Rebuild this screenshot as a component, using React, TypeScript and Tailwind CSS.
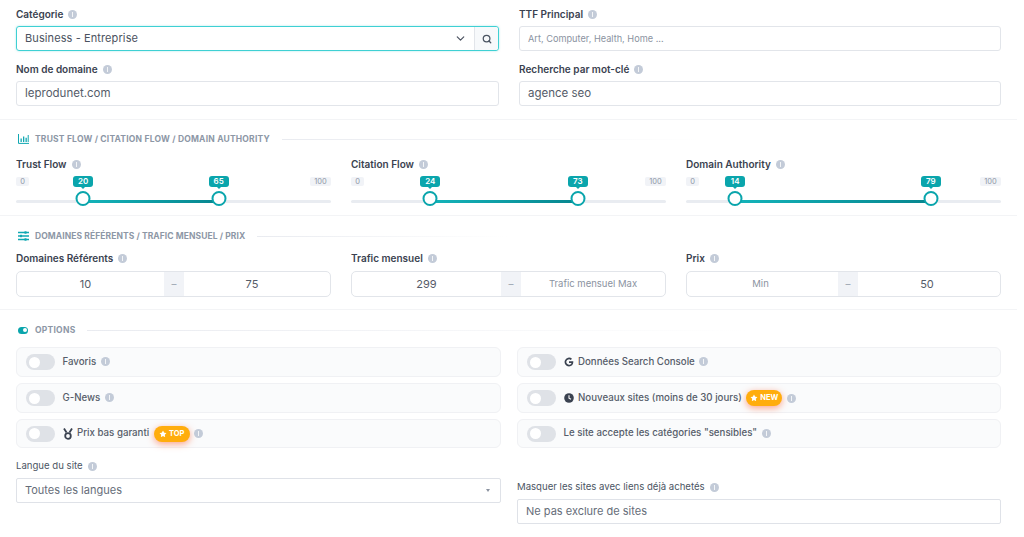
import React from 'react'
import { Search, ChevronDown, Star } from 'lucide-react'

const font = "font-['Inter','Liberation_Sans',sans-serif]"

const Info = ({ className = '' }: { className?: string }) => (
   <span className={`inline-flex w-[9px] h-[9px] rounded-full bg-[#c3cbd8] items-center justify-center shrink-0 ${className}`}>
      <span className='w-[1px] h-[5px] bg-white/80'></span>
   </span>
)

const Label = ({ text, light }: { text: string; light?: boolean }) => (
   <div className={`flex items-center gap-[5px] h-[14px] ${light ? 'text-[9.6px] font-normal text-[#4b5563]' : 'text-[10px] font-semibold text-[#3a4250]'}`}>
      {text} <Info />
   </div>
)

const TextBox = ({ value, small }: { value: string; small?: boolean }) => (
   <div className={`h-[25px] border border-[#e2e5ea] rounded-[3px] px-2 flex items-center ${small ? 'text-[9.2px] text-[#8b93a1]' : 'text-[11.5px] text-[#555c69]'}`}>{value}</div>
)

const Heading = ({ icon, text, track, lineClass }: { icon: React.ReactNode; text: string; track: string; lineClass: string }) => (
   <div className='flex items-center h-[12px]'>
      <span className='w-[19px] flex justify-start pl-[2px] text-[#11a8b2]'>{icon}</span>
      <span className={`text-[8.5px] font-bold text-[#8d97a6] whitespace-nowrap ${track}`}>{text}</span>
      <span className={`h-[1px] ml-3 bg-linear-to-r from-[#e9ebf0] to-transparent ${lineClass}`}></span>
   </div>
)

const Slider = ({ label, lo, hi }: { label: string; lo: number; hi: number }) => {
   const pos = (v: number) => `calc(${v / 100} * (100% - 14px) + 7px)`
   return (
      <div>
         <Label text={label} />
         <div className='relative h-[32px] mt-[5px]'>
            <span className='absolute left-0 top-[1px] h-[9px] w-[13px] text-center rounded-[2px] bg-[#f1f3f7] text-[7.5px] leading-[9px] text-[#8f98a6]'>0</span>
            <span className='absolute right-0 top-[1px] h-[9px] w-[21px] text-center rounded-[2px] bg-[#f1f3f7] text-[7.5px] leading-[9px] text-[#8f98a6]'>100</span>
            <div className='absolute left-0 right-0 top-[24px] h-[3px] rounded-full bg-[#e9ecf1]'></div>
            <div className='absolute top-[24px] h-[3px] bg-linear-to-r from-[#14b4ba] to-[#07868f]' style={{ left: pos(lo), right: `calc(100% - ${pos(hi)})` }}></div>
            {[lo, hi].map(v => (
               <React.Fragment key={v}>
                  <span className='absolute top-0 -translate-x-1/2 h-[11px] w-[20px] rounded-[3px] bg-[#0aa5ac] text-white text-[8px] leading-[11px] font-semibold text-center' style={{ left: pos(v) }}>
                     {v}
                     <span className='absolute left-[8px] top-[11px] border-x-[2px] border-t-[2px] border-x-transparent border-t-[#0aa5ac]'></span>
                  </span>
                  <span className='absolute top-[15px] -translate-x-1/2 w-[15px] h-[15px] rounded-full bg-white border-[2px] border-[#0aa5ac]' style={{ left: pos(v) }}></span>
               </React.Fragment>
            ))}
         </div>
      </div>
   )
}

const Range = ({ label, min, max, firstW, pad }: { label: string; min: string; max: string; firstW: string; pad: string }) => {
   const cell = (v: string) => (
      <div className={`flex-1 text-center ${pad} ${/\d/.test(v) ? 'text-[11px] text-[#555c69]' : 'text-[9.5px] text-[#8b93a1]'}`}>{v}</div>
   )
   return (
      <div>
         <Label text={label} />
         <div className='mt-[6px] h-[26px] border border-[#e2e5ea] rounded-[5px] flex items-stretch overflow-hidden'>
            <div className={`flex items-center ${firstW}`}>{cell(min)}</div>
            <div className='w-[20px] bg-[#f1f3f7] text-[#9aa3b0] text-[10px] flex items-center justify-center'>–</div>
            <div className='flex items-center flex-1'>{cell(max)}</div>
         </div>
      </div>
   )
}

const Toggle = () => (
   <span className='w-[29px] h-[16px] rounded-full bg-[#dfe2e7] flex items-center pl-[2.5px] shrink-0'>
      <span className='w-[11px] h-[11px] rounded-full bg-white'></span>
   </span>
)

const Badge = ({ text }: { text: string }) => (
   <span className='flex items-center gap-[2px] h-[16px] w-[36px] justify-center rounded-full bg-[#ffad0d] text-white text-[7.5px] font-bold shadow-[0_2px_7px_rgba(255,90,40,0.55)]'>
      <Star size={8} fill='white' strokeWidth={0} /> {text}
   </span>
)

const OptionRow = ({ children, className = '' }: { children: React.ReactNode; className?: string }) => (
   <div className={`flex items-center gap-[7.5px] px-[9px] border border-[#f0f1f4] rounded-[6px] bg-[#fafbfc] text-[9.7px] font-medium text-[#565d6a] ${className}`}>
      <Toggle />
      <div className='flex items-center gap-[4.5px] whitespace-nowrap'>{children}</div>
   </div>
)

const Medal = () => (
   <svg width='10' height='12' viewBox='0 0 10 12' className='shrink-0'>
      <circle cx='5' cy='8' r='2.8' fill='none' stroke='#3a4250' strokeWidth='1.8' />
      <path d='M1 0.5 L3.5 4.5 M9 0.5 L6.5 4.5' stroke='#3a4250' strokeWidth='1.8' fill='none' />
   </svg>
)

const GoogleG = () => (
   <svg width='10' height='10' viewBox='0 0 24 24' className='shrink-0'>
      <path d='M12 10v4.2h6c-.6 2.600-2.800 4.200-6 4.200a6.400 6.400 0 1 1 4.200-11.200l3-3A10.600 10.600 0 1 0 12 22.600c6.100 0 10.400-4.300 10.400-10.600 0-.7-.1-1.400-.2-2z' fill='#3a4250' />
   </svg>
)

const ClockSolid = () => (
   <svg width='10' height='10' viewBox='0 0 10 10' className='shrink-0'>
      <circle cx='5' cy='5' r='4.800' fill='#3a4250' />
      <path d='M5 2.300V5.200L7 6.300' stroke='white' strokeWidth='1.100' fill='none' />
   </svg>
)

const ChartIcon = () => (
   <svg width='11' height='10' viewBox='0 0 11 10'>
      <path d='M0.500 0V9.400H11' stroke='currentColor' strokeWidth='1' fill='none' />
      <path d='M2.500 4.500h1.300V8H2.500zM5 2.500h1.300V8H5zM7.500 3.800h1.300V8H7.500zM9.700 1h1V8h-1z' fill='currentColor' />
   </svg>
)

const SlidersIcon = () => (
   <svg width='11' height='10' viewBox='0 0 11 10'>
      <path d='M0 1.500H11M0 5H11M0 8.500H11' stroke='currentColor' strokeWidth='1.300' />
      <rect x='6.500' y='0.300' width='2' height='2.400' fill='currentColor' />
      <rect x='2' y='3.800' width='2' height='2.400' fill='currentColor' />
      <rect x='6.500' y='7.300' width='2' height='2.400' fill='currentColor' />
   </svg>
)

const App = () => {
   return (
      <div className={`w-[1024px] h-[537px] overflow-hidden bg-white ${font}`}>
         <div className='pt-[7px] px-[16px] pb-[13px] w-[1017px] border-b border-[#f3f4f6] grid grid-cols-[483px_482px] gap-x-[20px] gap-y-[11px]'>
            <div>
               <Label text='Catégorie' />
               <div className='mt-[5px] h-[25px] border border-[#3fd0d3] rounded-[3px] flex items-stretch shadow-[0_0_2px_rgba(63,208,211,0.5)]'>
                  <div className='flex-1 flex items-center justify-between pl-2 pr-[7px] text-[11px] tracking-[0.1px] text-[#4b5260]'>
                     Business - Entreprise
                     <ChevronDown size={13} strokeWidth={2.2} className='text-[#4b5260]' />
                  </div>
                  <div className='w-[24px] bg-[#f7f9fb] border-l border-[#e2e5ea] flex items-center justify-center rounded-r-[3px]'>
                     <Search size={10} strokeWidth={3} className='text-[#4b5563]' />
                  </div>
               </div>
            </div>
            <div>
               <Label text='TTF Principal' />
               <div className='mt-[5px]'><TextBox value='Art, Computer, Health, Home ...' small /></div>
            </div>
            <div>
               <Label text='Nom de domaine' />
               <div className='mt-[5px]'><TextBox value='leprodunet.com' /></div>
            </div>
            <div>
               <Label text='Recherche par mot-clé' />
               <div className='mt-[5px]'><TextBox value='agence seo' /></div>
            </div>
         </div>

         <div className='pt-[13px] px-[16px] pb-[7px] w-[1017px] border-b border-[#f3f4f6]'>
            <Heading icon={<ChartIcon />} text='TRUST FLOW / CITATION FLOW / DOMAIN AUTHORITY' track='tracking-[0.2px]' lineClass='w-[420px]' />
            <div className='grid grid-cols-3 gap-x-[20px] mt-[12px]'>
               <Slider label='Trust Flow' lo={20} hi={65} />
               <Slider label='Citation Flow' lo={24} hi={73} />
               <Slider label='Domain Authority' lo={14} hi={79} />
            </div>
         </div>

         <div className='pt-[14px] px-[16px] pb-[12px] w-[1017px] border-b border-[#f3f4f6]'>
            <Heading icon={<SlidersIcon />} text='DOMAINES RÉFÉRENTS / TRAFIC MENSUEL / PRIX' track='tracking-[0.08px]' lineClass='w-[250px]' />
            <div className='grid grid-cols-3 gap-x-[20px] mt-[9px]'>
               <Range label='Domaines Référents' min='10' max='75' firstW='w-[147px]' pad='pr-[10px]' />
               <Range label='Trafic mensuel' min='299' max='Trafic mensuel Max' firstW='w-[149px]' pad='' />
               <Range label='Prix' min='Min' max='50' firstW='w-[151px]' pad='pr-[4px]' />
            </div>
         </div>

         <div className='pt-[14px] px-[16px] w-[1017px]'>
            <div className='flex items-center h-[12px]'>
               <span className='w-[19px] pl-[2px]'>
                  <span className='block w-[10px] h-[7px] rounded-full bg-[#0aa5ac] relative'>
                     <span className='absolute right-[1px] top-[1.5px] w-[4px] h-[4px] rounded-full bg-white'></span>
                  </span>
               </span>
               <span className='text-[8.5px] font-bold tracking-[0.25px] text-[#8d97a6]'>OPTIONS</span>
               <span className='h-[1px] ml-3 w-[660px] bg-linear-to-r from-[#e9ebf0] to-transparent'></span>
            </div>
            <div className='grid grid-cols-[485px_484px] gap-x-[16px] mt-[11px]'>
               <div className='flex flex-col gap-[6px]'>
                  <OptionRow className='h-[30px]'>Favoris <Info /></OptionRow>
                  <OptionRow className='h-[30px]'>G-News <Info /></OptionRow>
                  <OptionRow className='h-[29px]'><Medal /> Prix bas garanti <Badge text='TOP' /> <Info /></OptionRow>
                  <div className='mt-[5px]'>
                     <Label text='Langue du site' light />
                     <div className='mt-[5px] h-[25px] border border-[#dfe2e8] rounded-[2px] pl-2 pr-[10px] flex items-center justify-between text-[11px] text-[#666d79]'>
                        Toutes les langues
                        <span className='border-x-[2.5px] border-t-[3px] border-x-transparent border-t-[#8b93a1]'></span>
                     </div>
                  </div>
               </div>
               <div className='flex flex-col gap-[6px]'>
                  <OptionRow className='h-[30px]'><GoogleG /> Données Search Console <Info /></OptionRow>
                  <OptionRow className='h-[30px]'><ClockSolid /> Nouveaux sites (moins de 30 jours) <Badge text='NEW' /> <Info /></OptionRow>
                  <OptionRow className='h-[29px]'>Le site accepte les catégories "sensibles" <Info /></OptionRow>
                  <div className='mt-[26px]'>
                     <Label text='Masquer les sites avec liens déjà achetés' light />
                     <div className='mt-[5px] h-[25px] border border-[#dfe2e8] rounded-[2px] px-2 flex items-center text-[11px] text-[#666d79]'>Ne pas exclure de sites</div>
                  </div>
               </div>
            </div>
         </div>
      </div>
   )
}

export default App
